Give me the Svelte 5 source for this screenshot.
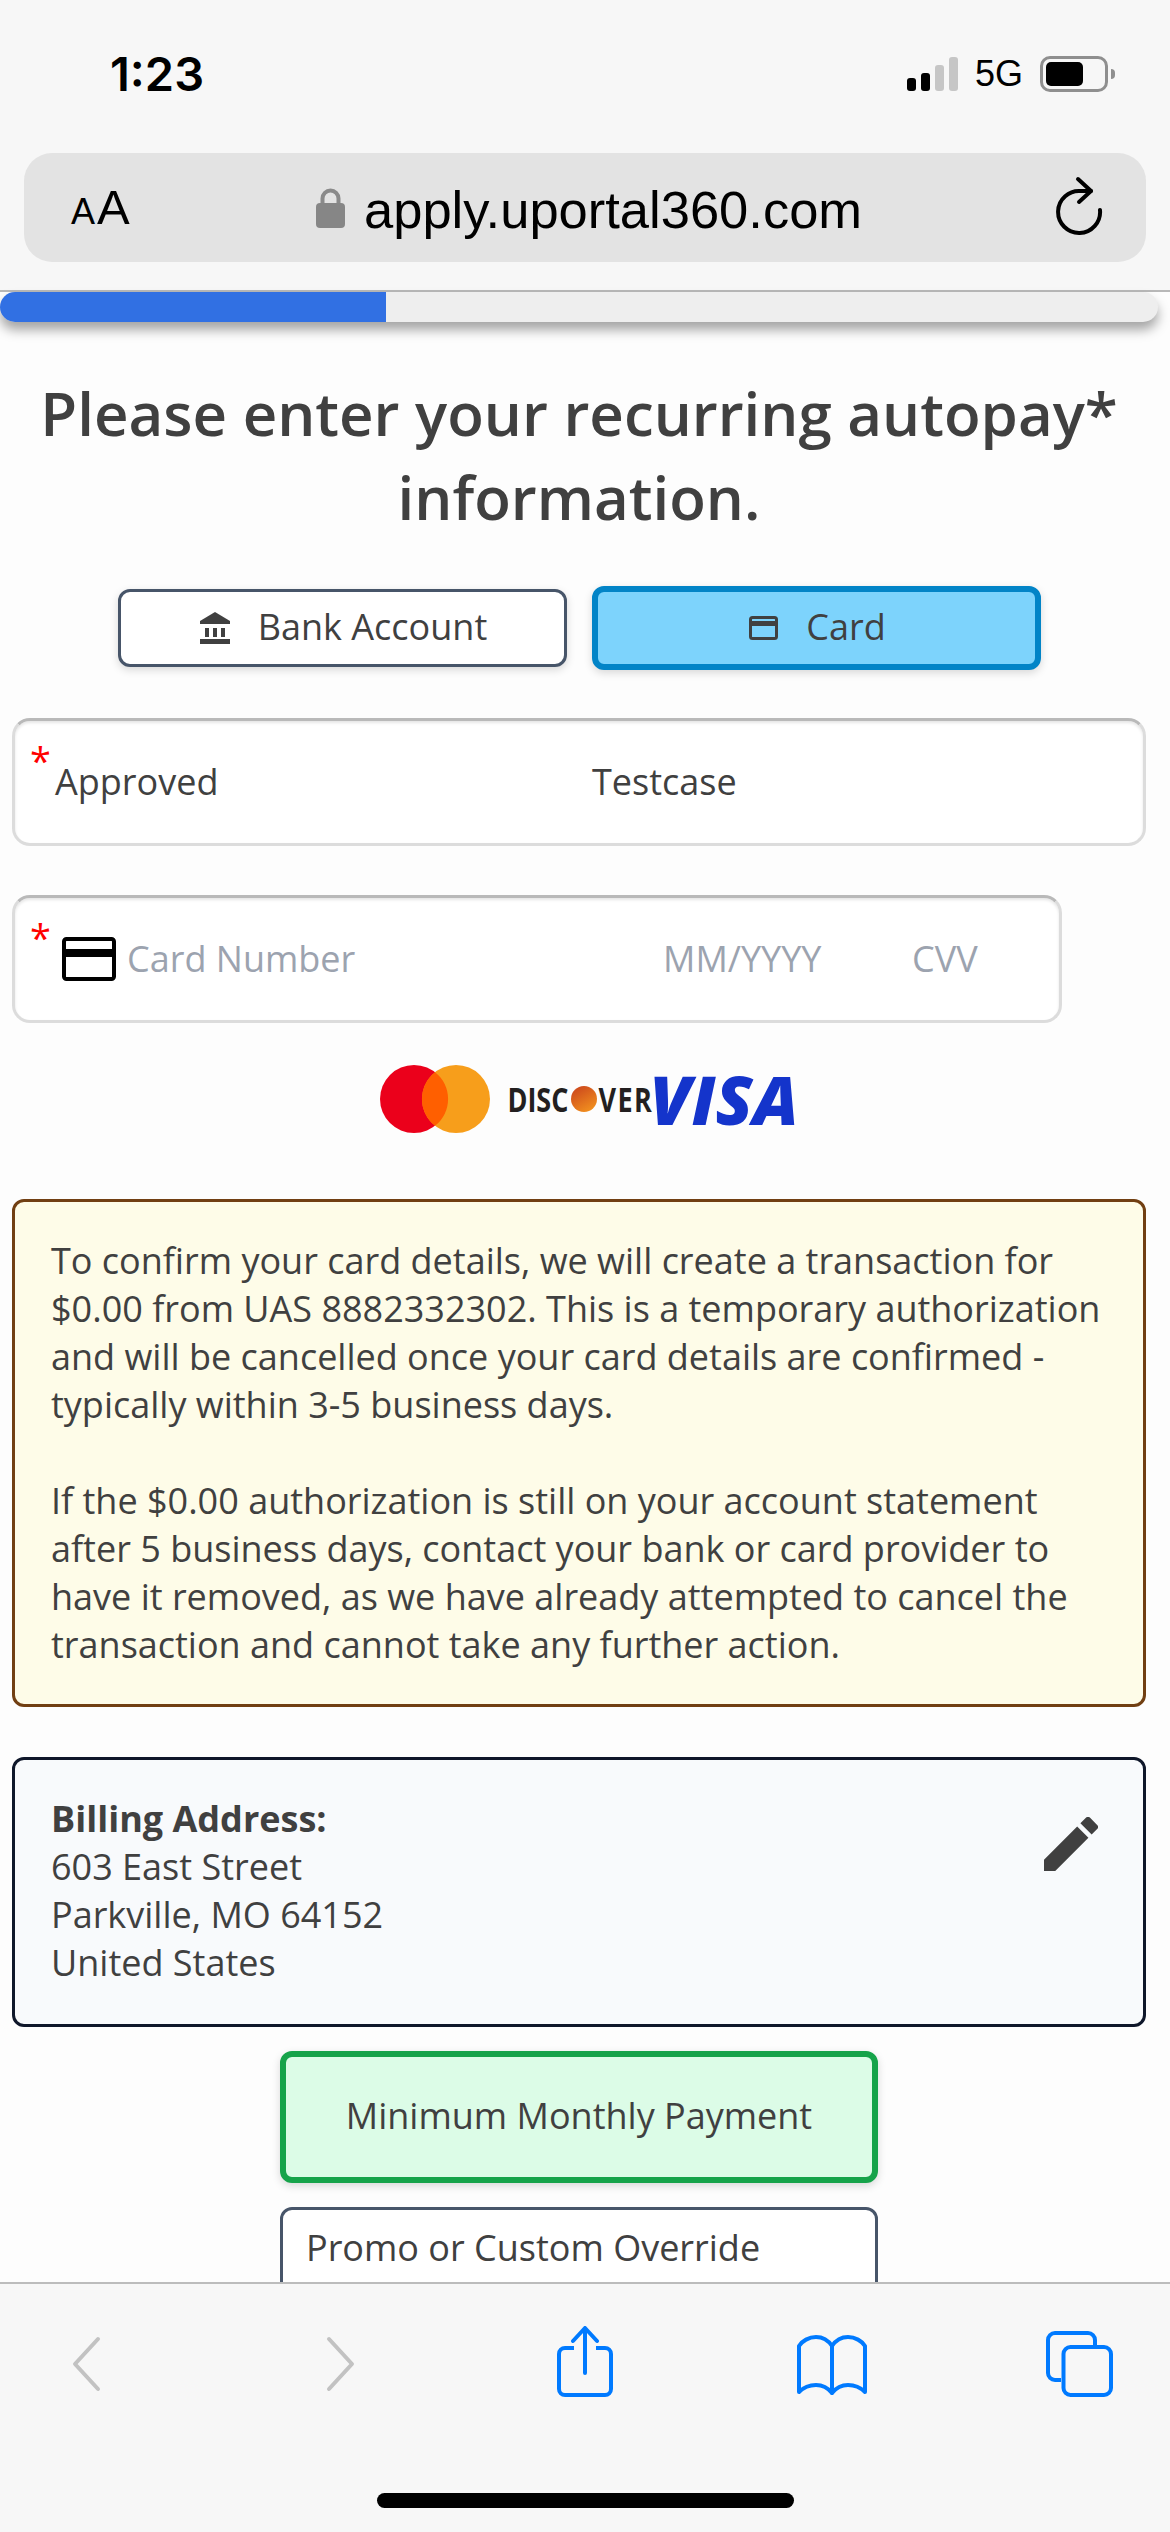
<script>
  const noticeParagraphs = [
    ['To confirm your card details, we will create a transaction for', '$0.00 from UAS 8882332302. This is a temporary authorization', 'and will be cancelled once your card details are confirmed -', 'typically within 3-5 business days.'],
    ['If the $0.00 authorization is still on your account statement', 'after 5 business days, contact your bank or card provider to', 'have it removed, as we have already attempted to cancel the', 'transaction and cannot take any further action.']
  ];
</script>

<div class="phone">
  <header class="chrome-top">
    <div class="status">
      <span class="time">1:23</span>
      <div class="status-right">
        <div class="signal">
          <i class="on h1"></i><i class="on h2"></i><i class="h3"></i><i class="h4"></i>
        </div>
        <span class="net">5G</span>
        <div class="battery"><div class="level"></div></div>
        <div class="nub"></div>
      </div>
    </div>
    <div class="urlbar">
      <span class="aa"><small>A</small>A</span>
      <div class="address">
        <svg width="29" height="40" viewBox="0 0 29 40">
          <path d="M6.500 18V10.500a8 8 0 0 1 16 0V18" fill="none" stroke="#8a8a8a" stroke-width="4"/>
          <rect x="0" y="15" width="29" height="25" rx="4" fill="#868686"/>
        </svg>
        <span class="host">apply.uportal360.com</span>
      </div>
      <svg class="reload" width="50" height="60" viewBox="0 0 50 60" fill="none" stroke="#000" stroke-width="4" stroke-linecap="round" stroke-linejoin="round">
        <path d="M36 16H26A21 21 0 1 0 45 35"/>
        <path d="M23 4l13 12-12 11"/>
      </svg>
    </div>
  </header>

  <div class="progress"><div class="fill"></div></div>

  <main class="content">
    <h1>Please enter your recurring autopay* information.</h1>

    <div class="tabs">
      <button class="tab">
        <svg width="30" height="32" viewBox="0 0 30 32" fill="#404040">
          <path d="M15 0L30 9v3H0V9z"/>
          <rect x="5" y="16" width="4" height="9"/><rect x="13" y="16" width="4" height="9"/><rect x="21" y="16" width="4" height="9"/>
          <rect x="0" y="27" width="30" height="5"/>
        </svg>
        Bank Account
      </button>
      <button class="tab selected">
        <svg width="29" height="24" viewBox="0 0 29 24">
          <rect x="1.500" y="1.500" width="26" height="21" rx="2" fill="none" stroke="#404040" stroke-width="3"/>
          <rect x="2" y="5" width="25" height="5" fill="#404040"/>
        </svg>
        Card
      </button>
    </div>

    <div class="field name">
      <span class="req">*</span>
      <span class="first">Approved</span>
      <span class="last">Testcase</span>
    </div>

    <div class="field cardno">
      <span class="req">*</span>
      <svg width="54" height="44" viewBox="0 0 54 44">
        <rect x="2" y="2" width="50" height="40" rx="2.500" fill="none" stroke="#000" stroke-width="4"/>
        <rect x="3" y="12" width="48" height="8" fill="#000"/>
      </svg>
      <span class="ph num">Card Number</span>
      <span class="ph exp">MM/YYYY</span>
      <span class="ph cvv">CVV</span>
    </div>

    <div class="logos">
      <svg width="110" height="68" viewBox="0 0 110 68">
        <circle cx="34" cy="34" r="34" fill="#eb001b"/>
        <circle cx="76" cy="34" r="34" fill="#f79e1b"/>
        <path d="M55 7.200a34 34 0 0 1 0 53.600a34 34 0 0 1 0-53.600z" fill="#ff5f00"/>
      </svg>
      <div class="discover">
        <span>DISC</span>
        <i class="ball"></i>
        <span class="ver">VER</span>
      </div>
      <span class="visa">VISA</span>
    </div>

    <div class="notice">
      {#each noticeParagraphs as para}
        <p>
          {#each para as line}
            <span class="line">{line}</span>
          {/each}
        </p>
      {/each}
    </div>

    <div class="billing">
      <div class="addr">
        <strong>Billing Address:</strong>
        <span>603 East Street</span>
        <span>Parkville, MO 64152</span>
        <span>United States</span>
      </div>
      <svg class="edit" width="54" height="54" viewBox="3 3 18 18" fill="#404040">
        <path d="M3 17.250V21h3.750L17.810 9.940l-3.750-3.750L3 17.250zM20.710 7.040a1 1 0 0 0 0-1.410l-2.340-2.340a1 1 0 0 0-1.410 0l-1.830 1.830 3.750 3.750 1.830-1.830z"/>
      </svg>
    </div>

    <button class="choice picked">Minimum Monthly Payment</button>
    <button class="choice other">Promo or Custom Override</button>
  </main>

  <footer class="chrome-bottom">
    <div class="toolbar">
      <svg width="30" height="72" viewBox="0 0 30 72" fill="none" stroke="#c2c2c2" stroke-width="4" stroke-linecap="round" stroke-linejoin="round">
        <path d="M27 13L4 38l23 25"/>
      </svg>
      <svg width="30" height="72" viewBox="0 0 30 72" fill="none" stroke="#c2c2c2" stroke-width="4" stroke-linecap="round" stroke-linejoin="round">
        <path d="M3 13l23 25L3 63"/>
      </svg>
      <svg width="56" height="72" viewBox="0 0 56 72" fill="none" stroke="#007aff" stroke-width="4" stroke-linecap="round" stroke-linejoin="round">
        <path d="M17 22H8a6 6 0 0 0-6 6v35a6 6 0 0 0 6 6h40a6 6 0 0 0 6-6V28a6 6 0 0 0-6-6h-9" stroke-linecap="butt"/>
        <path d="M28 47V3M16 15L28 2l12 13"/>
      </svg>
      <svg width="70" height="72" viewBox="0 0 70 72" fill="none" stroke="#007aff" stroke-width="4" stroke-linecap="round" stroke-linejoin="round">
        <path d="M35 20C31 14 25 11 19 11 12 11 5 15 2 20v46c6-6 11-7 17-7 7 0 12 3 16 8"/>
        <path d="M35 20c4-6 10-9 16-9 7 0 14 4 17 9v46c-6-6-11-7-17-7-7 0-12 3-16 8z"/>
      </svg>
      <svg width="68" height="72" viewBox="0 0 68 72" fill="none" stroke="#007aff" stroke-width="4" stroke-linejoin="round">
        <path d="M15 54H9a7 7 0 0 1-7-7V14a7 7 0 0 1 7-7h33a7 7 0 0 1 7 7v7"/>
        <rect x="17.500" y="21" width="47.500" height="48" rx="7"/>
      </svg>
    </div>
    <div class="home-bar"></div>
  </footer>
</div>

<style>
  :global(body) {
    margin: 0;
    background: #fff;
  }

  .phone {
    width: 1170px;
    height: 2532px;
    display: flex;
    flex-direction: column;
    overflow: hidden;
    font-family: "Open Sans", sans-serif;
    color: #404040;
    background: #fdfdfd;
  }

  .chrome-top {
    flex: none;
    height: 292px;
    box-sizing: border-box;
    background: #f7f7f7;
    border-bottom: 2px solid #b8b8b8;
    padding: 0 24px;
  }

  .status {
    height: 153px;
    display: flex;
    justify-content: space-between;
    align-items: flex-start;
    padding: 48px 31px 0 86px;
    box-sizing: border-box;
    font-family: Inter, sans-serif;
    color: #000;
  }

  .time {
    font-size: 47px;
    line-height: 52px;
    font-weight: 600;
  }

  .status-right {
    display: flex;
    align-items: center;
    height: 52px;
  }

  .signal {
    display: flex;
    align-items: flex-end;
    gap: 5px;
    height: 34px;
    margin-right: 17px;
  }

  .signal i {
    display: block;
    width: 9px;
    border-radius: 3px;
    background: #c6c6c6;
  }

  .signal i.on { background: #000; }
  .h1 { height: 13px; }
  .h2 { height: 18px; }
  .h3 { height: 26px; }
  .h4 { height: 34px; }

  .net {
    font-family: "Liberation Sans", sans-serif;
    font-size: 36px;
    line-height: 52px;
    margin-right: 17px;
  }

  .battery {
    width: 68px;
    height: 36px;
    box-sizing: border-box;
    border: 3px solid #8f8f8f;
    border-radius: 10px;
    padding: 3px;
  }

  .level {
    width: 37px;
    height: 100%;
    background: #000;
    border-radius: 5px;
  }

  .nub {
    width: 4px;
    height: 10px;
    margin-left: 3px;
    background: #8f8f8f;
    border-radius: 0 4px 4px 0;
  }

  .urlbar {
    height: 109px;
    background: #e3e3e3;
    border-radius: 28px;
    display: flex;
    align-items: center;
    padding: 0 41px 0 47px;
    color: #000;
  }

  .aa {
    flex: none;
    width: 245px;
    margin-top: 4px;
    font-family: "Liberation Sans", sans-serif;
    font-size: 49px;
    line-height: 60px;
  }

  .aa small {
    font-size: 36px;
    margin-right: 2px;
  }

  .address {
    display: flex;
    align-items: center;
    gap: 19px;
    font-family: "Liberation Sans", sans-serif;
    font-size: 52.500px;
  }

  .host {
    margin-top: 3px;
  }

  .reload {
    margin: 0 0 5px auto;
  }

  .progress {
    flex: none;
    height: 30px;
    width: 1158px;
    background: #eeeeee;
    border-radius: 15px;
    overflow: hidden;
    box-shadow: 0 8px 12px rgba(0, 0, 0, 0.35);
  }

  .fill {
    width: 386px;
    height: 100%;
    background: #3170e3;
  }

  .content {
    flex: 1;
    min-height: 0;
    overflow: hidden;
    display: flex;
    flex-direction: column;
    align-items: center;
    padding-right: 12px;
  }

  .content > * {
    flex: none;
  }

  h1 {
    margin: 49px 0 0;
    width: 1130px;
    text-align: center;
    font-size: 60px;
    line-height: 84px;
    font-weight: 600;
  }

  .tabs {
    display: flex;
    gap: 25px;
    align-items: center;
    margin-top: 47px;
  }

  button {
    font-family: inherit;
    color: inherit;
    background: #fff;
    cursor: pointer;
    box-sizing: border-box;
  }

  .tab {
    width: 449px;
    height: 78px;
    padding: 0 0 3px 3px;
    border: 3px solid #475569;
    border-radius: 12px;
    font-size: 36px;
    display: flex;
    align-items: center;
    justify-content: center;
    gap: 28px;
    box-shadow: 0 3px 8px rgba(0, 0, 0, 0.15);
  }

  .tab svg {
    margin-top: 3px;
  }

  .tab.selected {
    height: 84px;
    border: 6px solid #0284c7;
    background: #7dd3fc;
  }

  .field {
    box-sizing: border-box;
    position: relative;
    align-self: flex-start;
    margin-left: 12px;
    height: 128px;
    padding-bottom: 2px;
    background: #fff;
    border: 3px solid #dcdcdc;
    border-top-color: #b9b9b9;
    border-radius: 18px;
    box-shadow: inset 0 2px 3px rgba(0, 0, 0, 0.1);
    font-size: 36px;
    display: flex;
    align-items: center;
  }

  .req {
    position: absolute;
    left: 15px;
    top: 20px;
    color: #ff0000;
    font-size: 38px;
    line-height: 38px;
  }

  .name {
    width: 1134px;
    margin-top: 48px;
  }

  .first {
    margin-left: 40px;
    width: 537px;
  }

  .cardno {
    width: 1050px;
    margin-top: 49px;
  }

  .cardno svg {
    margin: 2px 0 0 47px;
    flex: none;
  }

  .ph { color: #9ca3af; }
  .num { margin-left: 11px; width: 536px; }
  .exp { width: 249px; }

  .logos {
    display: flex;
    align-items: center;
    margin-top: 42px;
    padding-left: 21px;
  }

  .discover {
    display: flex;
    align-items: center;
    margin-left: 17px;
    width: 142px;
    font-weight: 700;
    font-size: 27px;
    line-height: 40px;
    color: #231f20;
  }

  .discover span {
    display: block;
    transform: scaleY(1.25);
  }

  .ver {
    letter-spacing: 1.500px;
  }

  .ball {
    flex: none;
    width: 26px;
    height: 26px;
    margin: 0 1px 0 3px;
    border-radius: 50%;
    background: linear-gradient(150deg, #c8401c, #f79a1f);
  }

  .visa {
    font-weight: 800;
    font-style: italic;
    font-size: 68px;
    line-height: 68px;
    color: #1434cb;
  }

  .notice {
    box-sizing: border-box;
    align-self: stretch;
    margin: 66px 12px 0;
    height: 508px;
    padding: 35px 36px 0;
    background: #fefce8;
    border: 3px solid #713f12;
    border-radius: 12px;
    font-size: 36px;
    line-height: 48px;
  }

  .notice p {
    margin: 0 0 48px;
  }

  .line {
    display: block;
    white-space: nowrap;
  }

  .billing {
    box-sizing: border-box;
    align-self: stretch;
    margin: 50px 12px 0;
    height: 270px;
    padding: 35px 36px 0;
    background: #f8fafc;
    border: 3px solid #0f172a;
    border-radius: 12px;
    display: flex;
    justify-content: space-between;
    font-size: 36px;
    line-height: 48px;
  }

  .addr {
    display: flex;
    flex-direction: column;
  }

  .edit {
    margin: 22px 9px 0 0;
  }

  .choice {
    width: 598px;
    height: 132px;
    font-size: 36px;
    border-radius: 12px;
  }

  .picked {
    margin-top: 24px;
    padding-bottom: 5px;
    border: 6px solid #16a34a;
    background: #dcfce7;
    box-shadow: 0 3px 8px rgba(0, 0, 0, 0.15);
  }

  .other {
    margin-top: 24px;
    border: 3px solid #475569;
    text-align: left;
    height: auto;
    padding: 14px 23px 56px;
    line-height: 48px;
  }

  .chrome-bottom {
    flex: none;
    height: 250px;
    box-sizing: border-box;
    background: #f7f7f7;
    border-top: 2px solid #bcbcbc;
  }

  .toolbar {
    display: grid;
    grid-template-columns: 255px 231px 240px 249px auto;
    padding: 42px 0 0 71px;
  }

  .home-bar {
    width: 417px;
    height: 15px;
    margin: 95px 0 0 377px;
    background: #000;
    border-radius: 8px;
  }
</style>
